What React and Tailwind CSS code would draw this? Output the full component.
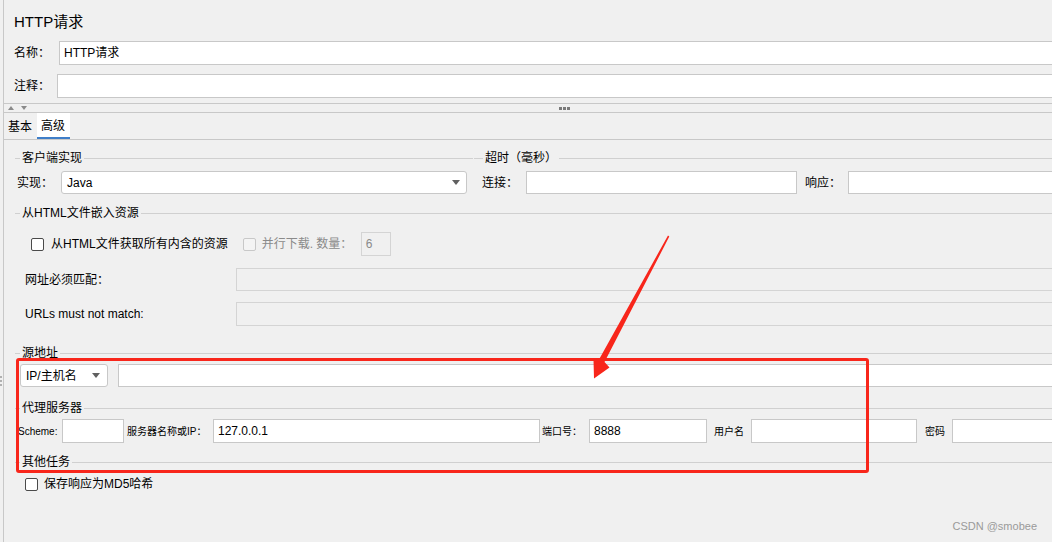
import React from 'react'

function Line({ className = '' }) {
  return <div className={`h-px bg-[#d0d0d0] ${className}`} />
}

function GroupTitle({ title, lead = 'w-[5px]', className = '' }) {
  return (
    <div className={`flex items-center h-[17px] ${className}`}>
      <Line className={lead} />
      <span className="px-[2px] leading-[17px] whitespace-nowrap">{title}</span>
      <Line className="flex-1" />
    </div>
  )
}

function Input({ className = '', children, disabled = false }) {
  return (
    <div
      className={`border flex items-center pl-[4px] whitespace-nowrap ${
        disabled ? 'bg-[#f0f0f0] border-[#d4d4d4] text-[#8a8a8a]' : 'bg-white border-[#c8c8c8]'
      } ${className}`}
    >
      {children}
    </div>
  )
}

function Caret() {
  return (
    <svg width="8" height="5" viewBox="0 0 8 5" className="shrink-0">
      <path d="M0 0 L8 0 L4 5 Z" fill="#606060" />
    </svg>
  )
}

function Check({ disabled = false }) {
  return (
    <div
      className={`w-[13px] h-[13px] rounded-[2px] border shrink-0 ${
        disabled ? 'border-[#c8c8c8] bg-[#f4f4f4]' : 'border-[#4a4a4a] bg-white'
      }`}
    />
  )
}

export default function App() {
  return (
    <div className="w-[1052px] h-[542px] overflow-hidden relative bg-[#f0f0f0] text-[12px] text-black font-['Liberation_Sans','Noto_Sans_CJK_SC',sans-serif]">
      <div className="ml-[3px] h-full w-[1120px] border-l border-[#c8c8c8]">
        {/* title */}
        <div className="h-[41px] pt-[12px] pl-[10px] text-[15px] leading-[20px]">HTTP请求</div>

        {/* name / comment */}
        <div className="flex items-center">
          <span className="w-[55px] pl-[10px]">名称：</span>
          <Input className="flex-1 h-[24px]">HTTP请求</Input>
        </div>
        <div className="flex items-center mt-[9px]">
          <span className="w-[53px] pl-[10px]">注释：</span>
          <Input className="flex-1 h-[24px]" />
        </div>

        {/* splitter */}
        <div className="mt-[5px] h-[10px] border-y border-[#c8c8c8] flex items-center">
          <div className="flex items-center gap-[7px] pl-[4px]">
            <svg width="6" height="4" viewBox="0 0 6 4"><path d="M0 4 L3 0 L6 4 Z" fill="#8a8a8a" /></svg>
            <svg width="6" height="4" viewBox="0 0 6 4"><path d="M0 0 L6 0 L3 4 Z" fill="#8a8a8a" /></svg>
          </div>
          <div className="flex gap-[1px] ml-[532px]">
            <div className="w-[3px] h-[3px] bg-[#7a7a7a]" />
            <div className="w-[3px] h-[3px] bg-[#7a7a7a]" />
            <div className="w-[3px] h-[3px] bg-[#7a7a7a]" />
          </div>
        </div>

        {/* tabs */}
        <div className="h-[27px] border-b border-[#c8c8c8] flex">
          <div className="w-[33px] pl-[4px] pt-[2px] flex items-center">基本</div>
          <div className="w-[33px] bg-white border-b-2 border-[#3f7ec8] flex items-center pl-[4px] pt-[2px]">高级</div>
        </div>

        {/* client impl + timeout */}
        <div className="flex mt-[10px] pl-[11px]">
          <GroupTitle title="客户端实现" className="w-[458px]" />
          <GroupTitle title="超时（毫秒）" lead="w-[9px] ml-[1px]" className="flex-1" />
        </div>
        <div className="flex items-center mt-[4px] pl-[13px]">
          <span className="w-[44px]">实现：</span>
          <div className="w-[406px] h-[23px] bg-white border border-[#c8c8c8] rounded-[3px] flex items-center justify-between pl-[5px] pr-[6px]">
            <span>Java</span>
            <Caret />
          </div>
          <span className="w-[44px] ml-[15px]">连接：</span>
          <Input className="w-[271px] h-[23px]" />
          <span className="w-[43px] ml-[8px]">响应：</span>
          <Input className="w-[260px] h-[23px]" />
        </div>

        {/* embedded resources */}
        <GroupTitle title="从HTML文件嵌入资源" className="mt-[11px] ml-[11px]" />
        <div className="flex items-center mt-[10px] pl-[27px]">
          <Check />
          <span className="ml-[7px]">从HTML文件获取所有内含的资源</span>
          <div className="ml-[15px]"><Check disabled /></div>
          <span className="ml-[6px] text-[#8a8a8a] w-[99px]">并行下载. 数量：</span>
          <Input disabled className="w-[30px] h-[24px]">6</Input>
        </div>
        <div className="flex items-center mt-[12px] pl-[21px]">
          <span className="w-[211px]">网址必须匹配：</span>
          <Input disabled className="flex-1 h-[23px]" />
        </div>
        <div className="flex items-center mt-[11px] pl-[21px]">
          <span className="w-[211px]">URLs must not match:</span>
          <Input disabled className="flex-1 h-[24px]" />
        </div>

        {/* source address */}
        <GroupTitle title="源地址" className="mt-[19px] ml-[11px]" />
        <div className="flex items-center mt-[2px] pl-[16px]">
          <div className="w-[88px] h-[23px] bg-white border border-[#c8c8c8] rounded-[3px] flex items-center justify-between pl-[5px] pr-[7px]">
            <span>IP/主机名</span>
            <Caret />
          </div>
          <Input className="flex-1 ml-[10px] h-[23px]" />
        </div>

        {/* proxy */}
        <GroupTitle title="代理服务器" className="mt-[13px] ml-[11px]" />
        <div className="flex items-center mt-[2px] pl-[14px] text-[10px]">
          <span className="w-[44px]">Scheme:</span>
          <Input className="w-[62px] h-[24px]" />
          <span className="w-[89px] pl-[3px]">服务器名称或IP：</span>
          <Input className="w-[327px] h-[24px] text-[12px]">127.0.0.1</Input>
          <span className="w-[49px] pl-[2px]">端口号：</span>
          <Input className="w-[118px] h-[24px] text-[12px]">8888</Input>
          <span className="w-[44px] pl-[7px]">用户名</span>
          <Input className="w-[166px] h-[24px]" />
          <span className="w-[35px] pl-[8px]">密码</span>
          <Input className="w-[160px] h-[24px]" />
        </div>

        {/* other tasks */}
        <GroupTitle title="其他任务" className="mt-[11px] ml-[11px]" />
        <div className="flex items-center mt-[5px] pl-[21px] h-[16px]">
          <Check />
          <span className="ml-[6px]">保存响应为MD5哈希</span>
        </div>
      </div>

      {/* left edge grip */}
      <div className="absolute left-0 top-[376px] flex flex-col gap-[2px]">
        <div className="w-[2px] h-[2px] bg-[#b0b0b0]" />
        <div className="w-[2px] h-[2px] bg-[#b0b0b0]" />
        <div className="w-[2px] h-[2px] bg-[#b0b0b0]" />
      </div>

      {/* annotation: red box + arrow */}
      <div className="absolute left-[16px] top-[358px] w-[853px] h-[115px] border-[3px] border-[#f8261b] rounded-[3px] pointer-events-none" />
      <svg className="absolute inset-0 pointer-events-none" width="1052" height="542" viewBox="0 0 1052 542">
        <polygon points="668,235.5 669.3,236.6 604.5,362 609.5,367.5 594,378.5 593.5,360 599,359.5" fill="#f8261b" />
      </svg>

      <div className="absolute right-[15px] bottom-[8px] text-[11px] text-[#9a9a9a] font-['Liberation_Sans',sans-serif]">CSDN @smobee</div>
    </div>
  )
}
